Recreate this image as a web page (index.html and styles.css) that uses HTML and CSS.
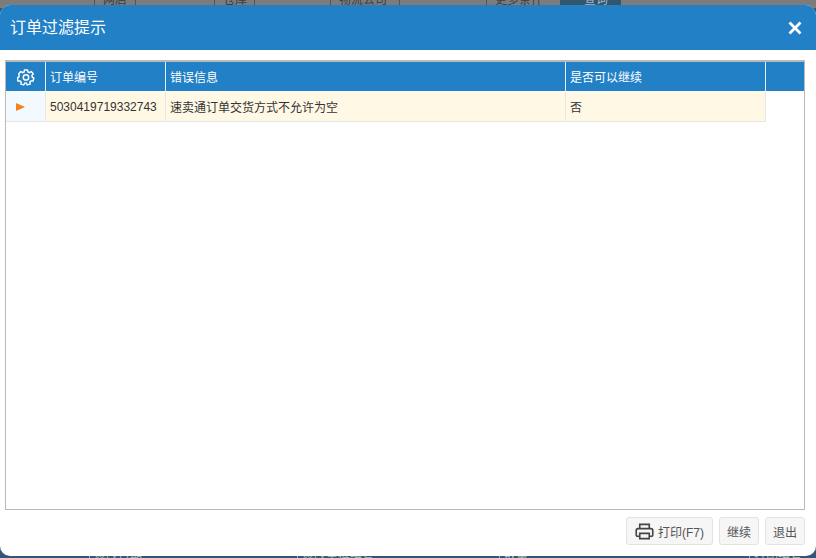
FILE: index.html
```html
<!DOCTYPE html>
<html lang="zh">
<head>
<meta charset="utf-8">
<title>订单过滤提示</title>
<link rel="stylesheet" href="styles.css">
</head>
<body>
<div class="backdrop">
  <div class="bg-top">
    <span class="bg-field f1">网店</span>
    <span class="bg-field f2">仓库</span>
    <span class="bg-field f3">物流公司</span>
    <span class="bg-field f4">更多条件</span>
    <span class="bg-btn">查询</span>
  </div>
  <div class="bg-bottom">
    <span class="bg-label b1">修改日期</span>
    <span class="bg-label b2">修改单据编号</span>
    <span class="bg-label b3">数量</span>
    <span class="bg-label b4">打印编号</span>
  </div>
</div>
<section class="modal">
  <header class="modal-head">
    <h1 class="modal-title">订单过滤提示</h1>
    <svg class="close" viewBox="0 0 14 14" aria-label="关闭"><path d="M1.5 1.5l11 11M12.5 1.5l-11 11"/></svg>
  </header>
  <div class="modal-body">
    <div class="grid">
      <div class="row head">
        <div class="cell c0">
          <svg class="gear" viewBox="0 0 24 24"><path d="M10 2.5h4l.6 2.9 1.7.8 2.6-1.5 2.7 3-1.7 2.4.3 1.9 2.3 1.5-1.1 3.8-2.9-.1-1.3 1.4.3 2.9-3.8 1-1.4-2.5h-1.9l-1.4 2.5-3.8-1 .3-2.9-1.3-1.4-2.9.1-1.1-3.8 2.3-1.5.3-1.9L2.4 7.7l2.7-3 2.6 1.5 1.7-.8z"/><circle cx="12" cy="12.5" r="3.6"/></svg>
        </div>
        <div class="cell c1">订单编号</div>
        <div class="cell c2">错误信息</div>
        <div class="cell c3">是否可以继续</div>
        <div class="cell c4"></div>
      </div>
      <div class="row data">
        <div class="cell c0"><span class="arrow"></span></div>
        <div class="cell c1">5030419719332743</div>
        <div class="cell c2">速卖通订单交货方式不允许为空</div>
        <div class="cell c3">否</div>
      </div>
    </div>
  </div>
  <footer class="modal-foot">
    <button class="btn btn-print" type="button">
      <svg class="printer" viewBox="0 0 20 20"><path d="M5 7V2.5h10V7M5 15H2.5A1.2 1.2 0 0 1 1.3 13.800V9A2 2 0 0 1 3.300 7h13.400a2 2 0 0 1 2 2v4.800a1.200 1.200 0 0 1-1.200 1.200H15M5 12h10v5.500H5z"/></svg>
      打印(F7)
    </button>
    <button class="btn" type="button">继续</button>
    <button class="btn" type="button">退出</button>
  </footer>
</section>
</body>
</html>
```
FILE: styles.css
```css
* { box-sizing: border-box; }
html, body { margin: 0; height: 100%; overflow: hidden; }
body {
  font-family: "Liberation Sans", "Noto Sans CJK SC", sans-serif;
  background: #2f5878;
  position: relative;
}
.backdrop { height: 558px; display: flex; flex-direction: column; justify-content: space-between; }
.bg-top {
  height: 8px;
  background: #7c7c7c;
  position: relative;
  overflow: hidden;
  font-size: 12px;
  color: #3d3d3d;
}
.bg-field {
  position: absolute;
  top: -9px;
  height: 18px;
  line-height: 18px;
  border-left: 1px solid #555;
  border-right: 1px solid #555;
  padding-left: 8px;
}
.f1 { left: 94px; width: 42px; }
.f2 { left: 214px; width: 41px; }
.f3 { left: 330px; width: 70px; }
.f4 { left: 486px; width: 62px; border-right: 0; }
.bg-btn {
  position: absolute;
  left: 560px;
  top: -9px;
  width: 61px;
  height: 18px;
  line-height: 18px;
  background: #33566f;
  color: #a9b8c3;
  padding-left: 24px;
}
.bg-bottom {
  height: 4px;
  background: #2f5878;
  position: relative;
  overflow: hidden;
  font-size: 12px;
  color: #aebdc9;
}
.bg-label { position: absolute; top: -6px; height: 16px; line-height: 16px; border-left: 1px solid #9fb0bd; padding-left: 4px; white-space: nowrap; }
.b1 { left: 89px; }
.b2 { left: 297px; }
.b3 { left: 499px; }
.b4 { left: 749px; }

.modal {
  position: absolute;
  left: 0;
  top: 5px;
  width: 816px;
  height: 551px;
  background: #fff;
  border-radius: 10px;
  overflow: hidden;
  display: flex;
  flex-direction: column;
}
.modal-head {
  height: 45px;
  flex: none;
  background: #2280c6;
  display: flex;
  align-items: center;
  justify-content: space-between;
  padding: 0 14px 0 10px;
}
.modal-title {
  margin: 0;
  font-size: 16px;
  font-weight: 400;
  color: #fff;
  line-height: 45px;
}
.close { width: 14px; height: 14px; fill: none; stroke: #fff; stroke-width: 2.8; }
.modal-body { flex: 1; padding: 10px 11px 0 5px; min-height: 0; }
.grid {
  height: 100%;
  border: 1px solid #b9b9b9;
  border-top-width: 2px;
  background: #fff;
}
.row { display: flex; font-size: 12px; }
.head {
  height: 30px;
  background: #2280c6;
  color: #fff;
  border-bottom: 1px solid #fff;
  font-weight: 400;
}
.head .cell { border-right: 1px solid #e4eef6; }
.data { height: 30px; width: 760px; background: #fff8e5; color: #333; border-bottom: 1px solid #e6e6e6; }
.data .cell { border-right: 1px solid #e6e6e6; }
.cell {
  display: flex;
  align-items: center;
  padding-left: 4px;
  flex: none;
  white-space: nowrap;
}
.c0 { width: 40px; padding: 0; justify-content: center; }
.c1 { width: 120px; }
.c2 { width: 400px; }
.c3 { width: 200px; }
.c4 { flex: 1; border-right: 0 !important; }
.data .c0 { background: #f2faff; justify-content: flex-start; padding-left: 10px; }
.gear { width: 18px; height: 18px; fill: none; stroke: #fff; stroke-width: 2; stroke-linejoin: round; }
.arrow {
  width: 0;
  height: 0;
  border-left: 9px solid #f5811f;
  border-top: 4.500px solid transparent;
  border-bottom: 4.500px solid transparent;
}
.modal-foot {
  flex: none;
  height: 46px;
  display: flex;
  justify-content: flex-end;
  gap: 6px;
  padding: 7px 11px 0 0;
}
.btn {
  height: 28px;
  padding: 0 7px;
  border: 1px solid #e3e3e3;
  border-radius: 3px;
  background: #f6f6f6;
  color: #555;
  font: 12px "Liberation Sans", "Noto Sans CJK SC", sans-serif;
  display: flex;
  align-items: center;
}
.btn-print { gap: 4px; width: 87px; padding: 0 8px; }
.printer { width: 19px; height: 19px; fill: none; stroke: #444; stroke-width: 1.7; flex: none; }
```
